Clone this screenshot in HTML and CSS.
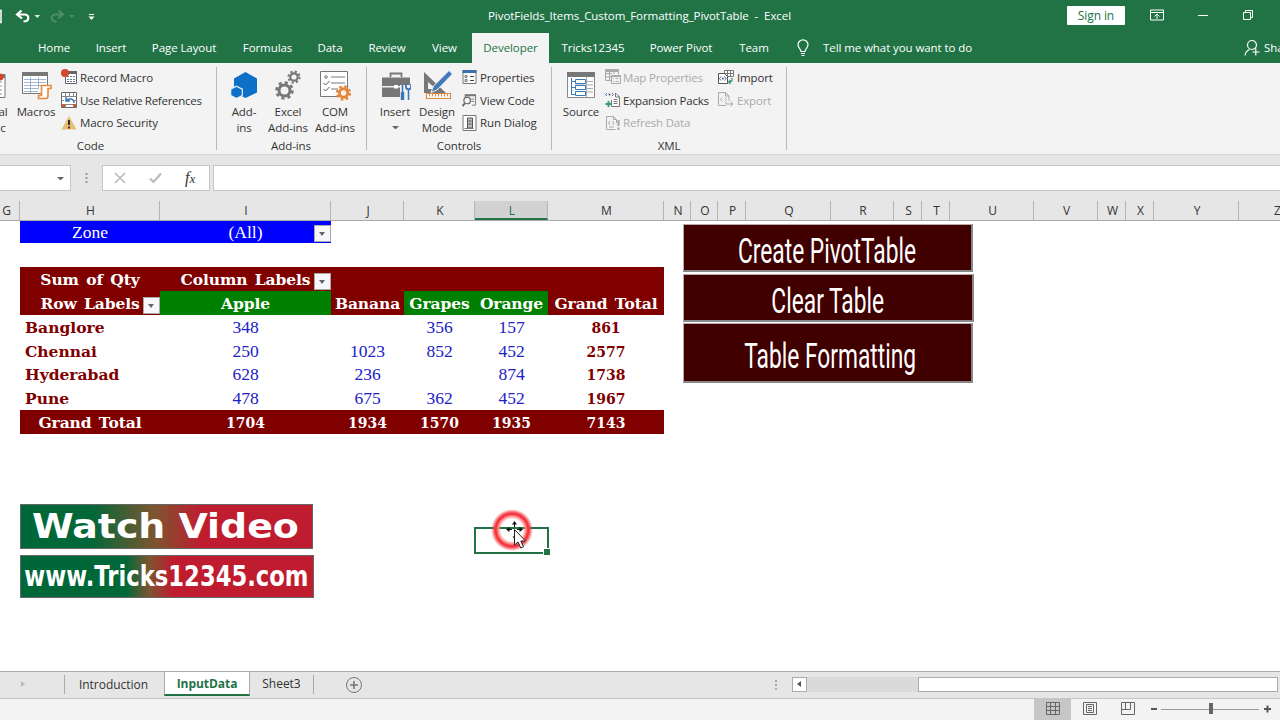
FILE: index.html
```html
<!DOCTYPE html>
<html lang="en">
<head>
  <meta charset="UTF-8">
  <meta name="viewport" content="width=device-width, initial-scale=1.0">
  <title>PivotFields_Items_Custom_Formatting_PivotTable - Excel</title>
  <link rel="stylesheet" href="styles.css">
</head>
<body>
  <div class="app">
    <header class="titlebar">
      <svg class="quick" width="110" height="32" viewBox="0 0 110 32" fill="none">
        <path d="M0 10.500h1v12h-1" stroke="#fff" stroke-width="1.500"/>
        <path d="M21.500 10.500l-4.500 4 5 4M17.500 14.500h7c5 0 5.500 7-1 7" stroke="#fff" stroke-width="2.200"/>
        <path d="M34.500 15h5.500l-2.700 3z" fill="#e4f0e8"/>
        <path d="M58.500 10.500l4.500 4-5 4M62.500 14.500h-7c-5 0-5.500 7 1 7" stroke="#4c8e68" stroke-width="2"/>
        <path d="M69 15h5.500l-2.700 3z" fill="#4c8e68"/>
        <path d="M89 14.500h5" stroke="#fff"/>
        <path d="M88.500 16.500h6l-3 3.500z" fill="#fff"/>
      </svg>
      <div class="doc-title">PivotFields_Items_Custom_Formatting_PivotTable&nbsp; -&nbsp; Excel</div>
      <div class="window-tools">
        <button class="signin">Sign in</button>
        <svg width="14" height="12" viewBox="0 0 14 12" fill="none" stroke="#fff"><path d="M.5 1h13v10H.5zM.5 3.500h13M7 10V5M4.500 7.500L7 5l2.500 2.500"/></svg>
        <svg width="10" height="12" viewBox="0 0 10 12" stroke="#fff"><path d="M0 6.500h10"/></svg>
        <svg width="12" height="12" viewBox="0 0 12 12" fill="none" stroke="#fff"><path d="M1.500 3.500h7v7h-7zM3.500 3V1.500h7v7H9"/></svg>
      </div>
    </header>

    <nav class="tabs">
      <span class="file">File</span>
      <span>Home</span>
      <span>Insert</span>
      <span>Page Layout</span>
      <span>Formulas</span>
      <span>Data</span>
      <span>Review</span>
      <span class="view-tab">View</span>
      <span class="active">Developer</span>
      <span>Tricks12345</span>
      <span>Power Pivot</span>
      <span>Team</span>
      <svg width="14" height="18" viewBox="0 0 14 18" fill="none" stroke="#fff" stroke-width="1.200"><path d="M5 12.500C5 10 2 9 2 5.800a5 5 0 0 1 10 0C12 9 9 10 9 12.500zM5 14.500h4M5.500 16.500h3"/></svg>
      <span class="tell">Tell me what you want to do</span>
      <svg width="16" height="18" viewBox="0 0 16 18" fill="none" stroke="#fff" stroke-width="1.200"><path d="M1 16.500c.5-3.500 2-5 4.500-6M8 1.500a4.500 4.500 0 1 1 0 9 4.500 4.500 0 0 1 0-9zM11.800 9.500v7M8.500 13h7"/></svg>
      <span class="share">Share</span>
    </nav>

    <section class="ribbon">
      <div class="group code">
        <div class="tools">
          <div class="big visual">
            <svg width="32" height="32" viewBox="0 0 32 32" fill="none"><path d="M4 5.500h25v23H4z" fill="#fff" stroke="#777"/><path d="M4 5h25v4H4z" fill="#777"/><path d="M8 13h18M8 17h18M8 21h18M8 25h18" stroke="#8796ad"/><circle cx="24" cy="8" r="3.500" fill="#d24726"/></svg>
            <span>Visual<br>Basic</span>
          </div>
          <div class="big macros">
            <svg width="32" height="32" viewBox="0 0 32 32" fill="none">
              <path d="M2.500 3.500h25v21h-25z" fill="#fff" stroke="#777"/>
              <path d="M2 3h26v4H2z" fill="#777"/>
              <path d="M4 10.500h22M4 13.500h22M4 16.500h20M4 19.500h14M4 22.500h14M10.500 8v16M18.500 8v12" stroke="#8ca4c8" stroke-width=".8"/>
              <path d="M21.500 16.500h9.500v3h-3v7c0 1.500-.5 3-2 3h-7.500v-3h3z" fill="#fff" stroke="#e58b3a" stroke-width="1.600"/>
            </svg>
            <span>Macros</span>
          </div>
          <div class="list">
            <div><svg width="16" height="16" viewBox="0 0 16 16" fill="none"><path d="M4.500 2.500h11v12h-11z" fill="#fff" stroke="#666"/><path d="M5 2h11v3H5z" fill="#666"/><path d="M6 7.500h8M6 10.500h8M6 12.500h8" stroke="#667c9c" stroke-dasharray="2 1"/><circle cx="4" cy="4" r="4" fill="#d3492d"/></svg>Record Macro</div>
            <div><svg width="16" height="16" viewBox="0 0 16 16" fill="none"><path d="M.5.500h15v15H.5z" fill="#fff" stroke="#666"/><path d="M.5 4.500h15M.5 8.500h15M4.500.500v15M8.500.500v4M12.500.500v15M.5 12.500h15" stroke="#888"/><path d="M3 5h10v7H3z" fill="#fff"/><path d="M13 11c0-5-6-5-8-2M5 5v4h4" stroke="#3976b9" stroke-width="1.500"/><path d="M1 12h3v3H1zM12 12h3v3h-3z" fill="#d0593c"/></svg><span class="tight">Use Relative References</span></div>
            <div><svg width="16" height="16" viewBox="0 0 16 16"><path d="M8 1l7.500 13.500H.5z" fill="#e9bd72"/><path d="M7 5h2v5H7zM7 11.500h2v2H7z" fill="#333"/></svg>Macro Security</div>
          </div>
        </div>
        <h6>Code</h6>
      </div>

      <div class="group addins">
        <div class="tools">
          <div class="big">
            <svg width="32" height="32" viewBox="0 0 32 32"><path d="M17.500 3l11.500 6.500v14L17.500 29 6 23V9.500z" fill="#0f70c7"/><path d="M8.500 17.200l5.800 3v6.300l-5.800 3-5.800-3v-6.300z" fill="#0f70c7" stroke="#f3f3f3" stroke-width="1.200"/></svg>
            <span>Add-<br>ins</span>
          </div>
          <div class="big">
            <svg width="32" height="32" viewBox="0 0 32 32" fill="none" stroke="#777"><circle cx="12.500" cy="21.500" r="5.500" stroke-width="3"/><circle cx="12.500" cy="21.500" r="8" stroke-width="2.600" stroke-dasharray="3.140 3.140"/><circle cx="22" cy="8" r="3.700" stroke-width="2.200"/><circle cx="22" cy="8" r="5.600" stroke-width="2" stroke-dasharray="2.200 2.200"/></svg>
            <span>Excel<br>Add-ins</span>
          </div>
          <div class="big">
            <svg width="32" height="32" viewBox="0 0 32 32" fill="none"><path d="M1.500 2.500h27v25h-27z" fill="#fff" stroke="#777"/><path d="M12 8h14M12 14h14M12 20h7" stroke="#777"/><circle cx="7" cy="8" r="1.300" stroke="#777"/><path d="M4.500 14l2 2 4-4M4.500 20l2 2 4-4" stroke="#555"/><circle cx="24.500" cy="24" r="4.200" stroke="#e58739" stroke-width="3" fill="#f3f3f3"/><circle cx="24.500" cy="24" r="6.400" stroke="#e58739" stroke-width="2.600" stroke-dasharray="2.513 2.513"/></svg>
            <span>COM<br>Add-ins</span>
          </div>
        </div>
        <h6>Add-ins</h6>
      </div>

      <div class="group controls">
        <div class="tools">
          <div class="big">
            <svg width="32" height="32" viewBox="0 0 32 32" fill="none"><path d="M11.500 8V4.500h11V8" stroke="#777" stroke-width="1.800"/><path d="M3 8.500h28V17H3zM3 18.500h28V28H3z" fill="#777"/><path d="M15 16h4v3.500h-4z" fill="#fff"/><path d="M21 16h11v15H21z" fill="#f3f3f3"/><path d="M23.500 16v8M29.500 20v11" stroke="#3c76b5" stroke-width="1.600"/><path d="M23.500 23v8" stroke="#3c76b5" stroke-width="3.500"/><path d="M27 15v3c0 3 5 3 5 0v-3" stroke="#3c76b5" stroke-width="1.800"/></svg>
            <span>Insert<i class="caret"></i></span>
          </div>
          <div class="big">
            <svg width="32" height="32" viewBox="0 0 32 32" fill="none"><path d="M3 3l22 21H3zM7 13v7h8z" fill="#777" fill-rule="evenodd"/><path d="M28 1.500l3.500 3.500L16 21l-6 2.500L12.500 17z" fill="#4179b9" stroke="#f3f3f3"/><path d="M5.500 24.500h24v5h-24z" fill="#fff" stroke="#dd8a3e" stroke-width="1.200"/><path d="M8.500 25v2.500M11.500 25v2.500M14.500 25v2.500M17.500 25v2.500M20.500 25v2.500M23.500 25v2.500M26.500 25v2.500" stroke="#dd8a3e"/></svg>
            <span>Design<br>Mode</span>
          </div>
          <div class="list">
            <div><svg width="14" height="16" viewBox="0 0 14 16" fill="none"><path d="M.5 1.500h13v13H.5z" fill="#fff" stroke="#777"/><path d="M0 1h14v3H0z" fill="#3d70ac"/><path d="M7.500 7.500h4M7.500 11.500h4" stroke="#444"/><path d="M2.500 6.500h2v2h-2zM2.500 10.500h2v2h-2z" stroke="#777"/></svg>Properties</div>
            <div><svg width="16" height="16" viewBox="0 0 16 16" fill="none"><path d="M3.500 6V2.500h11v11h-4" stroke="#777"/><path d="M3 2h12v2H3z" fill="#777"/><path d="M10 7h3M10 9.500h3" stroke="#777"/><circle cx="5.500" cy="8.500" r="3.500" stroke="#666" stroke-width="1.300"/><path d="M3 11.500L.5 14.500" stroke="#666" stroke-width="2"/></svg>View Code</div>
            <div><svg width="14" height="16" viewBox="0 0 14 16" fill="none"><path d="M.5.500h13v15H.5z" fill="#fff" stroke="#777"/><path d="M5 3h5v10H5z" fill="#bbb" stroke="#555"/><path d="M2 13.500h9" stroke="#777"/><path d="M6 6h3M6 9h3" stroke="#555"/></svg>Run Dialog</div>
          </div>
        </div>
        <h6>Controls</h6>
      </div>

      <div class="group xml">
        <div class="tools">
          <div class="big">
            <svg width="32" height="32" viewBox="0 0 32 32" fill="none"><path d="M2.500 3.500h27v25h-27z" fill="#fff" stroke="#888"/><path d="M2 3h28v5H2z" fill="#777"/><path d="M10 12.500h18M10 16h18M10 19.500h18M10 23h18M21.500 8v20" stroke="#aaa"/><path d="M6.500 9v17M6.500 12.500h4M6.500 18.500h4M6.500 25.500h4" stroke="#3979b8"/><path d="M10.500 10.500h10v4h-10zM10.500 16.500h10v4h-10zM10.500 22.500h10v4h-10z" fill="#fff" stroke="#3979b8"/></svg>
            <span>Source</span>
          </div>
          <div class="list first">
            <div class="off"><svg width="16" height="16" viewBox="0 0 16 16" fill="none" stroke="#aaa"><path d="M7 11.500H.5V.500h13v5M.5 4.500H7M4.500 1v10M.5 8H7M9 1v4"/><path d="M.5 2h13" stroke-width="2"/><path d="M6.500 6.500h9v8h-9zM8 9.500h1M10.500 9.500h3M8 12.500h1M10.500 12.500h3"/><path d="M6.500 7h9" stroke-width="2"/></svg>Map Properties</div>
            <div><svg width="16" height="16" viewBox="0 0 16 16" fill="none"><path d="M10 1.500h1l3.500 3.500v9.500h-8V8" fill="#fff" stroke="#777"/><path d="M10.500 1.500V5h4M8.500 7.500h4M8.500 9.500h4M8.500 11.500h4" stroke="#777"/><path d="M2 1L.5 2.500 2 4M7 1l1.500 1.500L7 4" stroke="#3979b8"/><circle cx="4.500" cy="2.500" r="1" fill="#555"/><path d="M3.500 9v6M.5 12h6" stroke="#3e9c6c" stroke-width="2"/></svg>Expansion Packs</div>
            <div class="off"><svg width="16" height="16" viewBox="0 0 16 16" fill="none" stroke="#aaa"><path d="M10.500 14.500h-9V1.500h7l3 3V8M8.500 1.500v3h3M5 6L3.500 8 5 10M7.500 6L9 8l-1.500 2M4 12h5"/><path d="M13.500 5v6M13.500 12.500v2.500" stroke-width="2.200"/></svg>Refresh Data</div>
          </div>
          <div class="list second">
            <div><svg width="16" height="16" viewBox="0 0 16 16" fill="none"><path d="M6.500 1.500h9v6h-9zM6.500 4.500h9M9.500 1.500v6M12.500 1.500v6" fill="#fff" stroke="#777"/><path d="M.5 4.500h6l3 3v7h-9z" fill="#fff" stroke="#555"/><path d="M3 7.500L1.500 9.500 3 11.500M6.500 7.500L8 9.500l-1.500 2" stroke="#3979b8"/><circle cx="4.800" cy="9.500" r="1" fill="#555"/><path d="M14 9v2c0 1.500-1 2-3 2M12.500 11l-2 2 2 2" stroke="#3e9c6c" stroke-width="1.300"/></svg>Import</div>
            <div class="off"><svg width="16" height="16" viewBox="0 0 16 16" fill="none" stroke="#aaa"><path d="M8 13.500H.5V.500h7l3.500 3.500v5M7.500.500v3.500h3.500M4 5.500L2.500 7.500 4 9.500M7 5.500l1.500 2L7 9.500M8 10v2h7M12.500 9.500l2.500 2.500-2.500 2.500"/></svg>Export</div>
          </div>
        </div>
        <h6>XML</h6>
      </div>
    </section>

    <section class="formula-bar">
      <div class="name-box"><i class="caret"></i></div>
      <svg width="31" height="25" viewBox="0 0 31 25" fill="#999"><path d="M14.500 8h2v2h-2zM14.500 12h2v2h-2zM14.500 16h2v2h-2z"/></svg>
      <div class="fx-box">
        <svg width="12" height="12" viewBox="0 0 12 12" stroke="#bbb" stroke-width="1.700"><path d="M1 1l10 10M11 1L1 11"/></svg>
        <svg width="13" height="12" viewBox="0 0 13 12" fill="none" stroke="#bbb" stroke-width="2.200"><path d="M1 6.500l3.500 3.500L12 1.500"/></svg>
        <em>f<small>x</small></em>
      </div>
      <div class="formula"></div>
    </section>

    <div class="columns">
      <span>G</span><span>H</span><span>I</span><span>J</span><span>K</span><span class="current">L</span><span>M</span><span>N</span><span>O</span><span>P</span><span>Q</span><span>R</span><span>S</span><span>T</span><span>U</span><span>V</span><span>W</span><span>X</span><span>Y</span><span>Z</span>
    </div>

    <main class="sheet">
      <div class="pivot">
        <div class="cell zone">Zone</div>
        <div class="cell zone">(All)<b class="drop"></b></div>
        <div class="blank"></div>
        <div class="blank row"></div>

        <div class="cell head">Sum of Qty</div>
        <div class="cell head">Column Labels<b class="drop"></b></div>
        <div class="cell head fill"></div>

        <div class="cell head">Row Labels<b class="drop"></b></div>
        <div class="cell head green">Apple</div>
        <div class="cell head">Banana</div>
        <div class="cell head green">Grapes</div>
        <div class="cell head green">Orange</div>
        <div class="cell head">Grand Total</div>

        <div class="cell name">Banglore</div><div class="cell">348</div><div class="cell"></div><div class="cell">356</div><div class="cell">157</div><div class="cell total">861</div>
        <div class="cell name">Chennai</div><div class="cell">250</div><div class="cell">1023</div><div class="cell">852</div><div class="cell">452</div><div class="cell total">2577</div>
        <div class="cell name">Hyderabad</div><div class="cell">628</div><div class="cell">236</div><div class="cell"></div><div class="cell">874</div><div class="cell total">1738</div>
        <div class="cell name">Pune</div><div class="cell">478</div><div class="cell">675</div><div class="cell">362</div><div class="cell">452</div><div class="cell total">1967</div>

        <div class="cell head">Grand Total</div><div class="cell head foot">1704</div><div class="cell head foot">1934</div><div class="cell head foot">1570</div><div class="cell head foot">1935</div><div class="cell head foot">7143</div>
      </div>

      <!-- objects floating over the grid -->
      <button class="macro create"><span>Create PivotTable</span></button>
      <button class="macro clear"><span>Clear Table</span></button>
      <button class="macro format"><span>Table Formatting</span></button>
      <div class="banner watch"><span>Watch Video</span></div>
      <div class="banner site"><span>www.Tricks12345.com</span></div>
      <div class="selection"></div>
      <div class="click-ring"></div>
      <svg class="pointer" width="24" height="30" viewBox="0 0 24 30">
        <path d="M9.500 0l2.500 3.500H7zM9.500 18l-2-2.500h4zM1 8.500l3.500-2.500v5zM18 8.500l-3.500-2.500v5z" fill="#111"/>
        <path d="M9.500 3v3M4 8.500h3M12 8.500h3" stroke="#111" fill="none"/>
        <path d="M9.500 8.500v15.500l3.500-3 2.800 6 2.700-1.200-2.700-5.800h4.700z" fill="#fff" stroke="#222"/>
      </svg>
    </main>

    <footer class="sheet-tabs">
      <span class="nav"><i></i></span>
      <span class="tab intro">Introduction</span>
      <span class="tab on">InputData</span>
      <span class="tab third">Sheet3</span>
      <svg class="add" width="18" height="18" viewBox="0 0 18 18" fill="none" stroke="#777"><circle cx="9" cy="9" r="7.500"/><path d="M5 9h8M9 5v8" stroke-width="1.600"/></svg>
      <svg class="grip" width="4" height="14" viewBox="0 0 4 14" fill="#aaa"><path d="M1 2h2v2H1zM1 6h2v2H1zM1 10h2v2H1z"/></svg>
      <div class="scroll"><div class="arrow"></div><div class="track"></div><div class="thumb"></div></div>
    </footer>

    <footer class="status">
      <div class="view on"><svg width="14" height="14" viewBox="0 0 14 14" fill="none" stroke="#666"><path d="M.5.500h13v12H.5zM.5 4.500h13M.5 8.500h13M4.500.500v12M9.500.500v12"/></svg></div>
      <div class="view"><svg width="14" height="14" viewBox="0 0 14 14" fill="none" stroke="#666"><path d="M.5.500h13v12H.5zM3.500 2.500h7v8h-7zM5 4.500h4M5 6.500h4M5 8.500h4"/></svg></div>
      <div class="view"><svg width="14" height="14" viewBox="0 0 14 14" fill="none" stroke="#666"><path d="M.5.500h13v12H.5zM.5 7.500H9.500V.500M4.500.500v7"/></svg></div>
      <svg class="zoom" width="130" height="22" viewBox="0 0 130 22"><path d="M8 11h6M121 11h7M124.500 7.500v7" stroke="#555" stroke-width="2"/><path d="M18 11.500h98" stroke="#999"/><path d="M66 5h4v11h-4z" fill="#666"/></svg>
    </footer>
  </div>
</body>
</html>
```
FILE: styles.css
```css
* { box-sizing: border-box; }
body {
  margin: 0;
  font: 12px "Open Sans", "Noto Sans", sans-serif;
  color: #333;
}
svg { display: block; flex: none; }
button { border: 0; padding: 0; font: inherit; }

.app {
  display: flex;
  flex-direction: column;
  width: 1280px;
  height: 720px;
  overflow: hidden;
  background: #fff;
}

/* title bar */
.titlebar {
  display: flex;
  align-items: center;
  flex: none;
  height: 32px;
  color: #fff;
  background: #217346;
}
.doc-title {
  width: 304px;
  margin-left: 378px;
  padding-bottom: 2px;
  font-size: 11.5px;
  letter-spacing: -.06px;
  white-space: nowrap;
}
.window-tools {
  display: flex;
  align-items: center;
  margin-left: 275px;
  padding-bottom: 2px;
}
.signin {
  width: 58px;
  height: 19px;
  margin-right: 25px;
  padding-top: 1px;
  border-radius: 1px;
  line-height: 18px;
  color: #217346;
  background: #fff;
  letter-spacing: -.1px;
}
.window-tools svg + svg { margin-left: 34px; }

/* ribbon tabs */
.tabs {
  display: grid;
  grid-template-columns: 25px 58px 56px 90px 77px 48px 66px 52px 77px 88px 88px 58px 40px 417px 24px 40px;
  align-items: center;
  justify-items: center;
  flex: none;
  height: 31px;
  font-size: 11.5px;
  letter-spacing: -.08px;
  color: #fff;
  background: #217346;
  white-space: nowrap;
}
.tabs .file { justify-self: start; margin-left: -18px; }
.tabs .view-tab { padding-right: 3px; }
.tabs .tell { justify-self: start; }
.tabs .share { justify-self: start; }
.tabs .active {
  width: 77px;
  height: 30px;
  align-self: end;
  line-height: 29px;
  text-align: center;
  color: #217346;
  background: #f3f3f3;
}

/* ribbon */
.ribbon {
  display: flex;
  flex: none;
  height: 92px;
  border-bottom: 1px solid #d5d5d5;
  background: #f3f3f3;
}
.group {
  display: flex;
  flex-direction: column;
  height: 83px;
  margin-top: 4px;
  border-right: 1px solid #b9b9b9;
}
.group h6 {
  margin: 0;
  font-size: 11.5px;
  font-weight: normal;
  line-height: 16px;
  letter-spacing: -.1px;
  text-align: center;
}
.code { width: 217px; }
.code h6 { padding-right: 35px; }
.addins { width: 150px; padding-left: 5px; }
.addins h6 { padding-right: 6px; }
.controls { width: 185px; padding-left: 8px; }
.controls h6 { padding-right: 8px; }
.xml { width: 235px; padding-left: 7px; }
.xml h6 { padding-right: 7px; }
.tools { display: flex; flex: none; height: 71px; align-items: flex-start; }
.big {
  display: flex;
  flex-direction: column;
  align-items: center;
  width: 44px;
  padding-top: 2px;
  font-size: 11.5px;
  line-height: 16px;
  letter-spacing: -.1px;
  text-align: center;
  white-space: nowrap;
}
.big span { padding-top: 3px; }
.big .caret { display: block; margin: 6px auto 0; }
.big.visual { width: 52px; margin-left: -34px; }
.big.macros { width: 36px; }
.addins .big:nth-child(3) { width: 50px; }
.controls .big:first-child { width: 40px; }
.list {
  margin-top: -1px;
  padding-left: 3px;
  font-size: 11.5px;
  letter-spacing: -.12px;
  white-space: nowrap;
}
.code .list { padding-left: 7px; }
.list > div { display: flex; align-items: center; gap: 3px; height: 22.7px; }
.list.first { padding-left: 2px; letter-spacing: -.18px; }
.list.first > div { gap: 2px; }
.list.second { padding-left: 9px; }
.controls .list svg { width: 15px; }
.off { color: #aaa; }
.tight { letter-spacing: -.27px; }
.caret {
  width: 7px;
  border: 3.5px solid transparent;
  border-top-color: #666;
  border-bottom: 0;
}

/* formula bar */
.formula-bar {
  display: flex;
  flex: none;
  height: 46px;
  padding-top: 10px;
  background: #e6e6e6;
}
.name-box, .fx-box, .formula {
  display: flex;
  align-items: center;
  height: 26px;
  border: 1px solid #c6c6c6;
  background: #fff;
}
.name-box {
  justify-content: flex-end;
  width: 71px;
  padding-right: 6px;
  border-left: 0;
}
.fx-box { width: 108px; padding-left: 11px; gap: 23px; }
.fx-box em {
  font: italic 16px "Liberation Serif", serif;
  color: #333;
}
.fx-box small { font-size: 13px; }
.formula { flex: 1; margin-left: 3px; border-right: 0; }

/* column headers, same widths as the sheet grid */
.columns {
  display: grid;
  grid-template-columns: 28px 140px 171px 73px 71px 73px 116px 27px 27px 28px 85px 63px 28px 28px 84px 64px 28px 28px 85px 76px;
  flex: none;
  width: 1323px;
  height: 20px;
  margin-left: -8px;
  border-bottom: 1px solid #ababab;
  line-height: 20px;
  text-align: center;
  background: #e6e6e6;
}
.columns span { height: 19px; padding-left: 2px; border-right: 1px solid #b5b5b5; }
.columns .current {
  color: #217346;
  background: #d2d2d2;
  border-bottom: 2px solid #217346;
}

/* worksheet */
.sheet { position: relative; height: 450px; flex: none; }
.pivot {
  display: grid;
  grid-template-columns: 140px 171px 73px 71px 73px 116px;
  grid-template-rows: 22px 24px 24px 24px repeat(4, 23.75px) 24px;
  width: 644px;
  margin-left: 20px;
  font: 17.5px "Liberation Serif", serif;
}
.blank { grid-column: 3 / -1; }
.blank.row { grid-column: 1 / -1; }
.cell {
  position: relative;
  display: flex;
  align-items: center;
  justify-content: center;
  padding-top: 1px;
  white-space: nowrap;
  color: #2020c8;
}
.zone { color: #fff; background: #0000ff; }
.head, .name { font: bold 15.5px "DejaVu Serif", serif; }
.head {
  color: #fff;
  background: #800000;
  letter-spacing: -.1px;
  word-spacing: 2px;
}
.foot, .total {
  font: bold 15.5px "DejaVu Serif Condensed", "DejaVu Serif", serif;
  font-stretch: condensed;
  letter-spacing: 0;
}
.fill { grid-column: 3 / -1; }
.green { background: #008000; }
.name {
  justify-content: flex-start;
  padding-left: 5px;
  color: #800000;
}
.total { color: #800000; }
.drop {
  position: absolute;
  right: 0;
  bottom: 1px;
  width: 17px;
  height: 17px;
  border: 1px solid #aaa;
  background: #f7f7fb;
}
.drop::after {
  content: "";
  position: absolute;
  left: 4px;
  top: 6px;
  border: 3.5px solid transparent;
  border-top: 4px solid #666;
  border-bottom: 0;
}

/* floating buttons */
.macro {
  position: absolute;
  left: 683px;
  display: flex;
  align-items: center;
  justify-content: center;
  width: 290px;
  border: 1px solid #b9a9a9;
  border-right: 2px solid #888;
  border-bottom: 2px solid #888;
  font: 35px/40px Roboto, sans-serif;
  color: #fff;
  background: #400000;
}
.macro span {
  flex: none;
  padding-top: 8px;
  white-space: nowrap;
  transform: scaleX(.65);
}
.create { top: 3px; height: 48px; }
.clear { top: 53px; height: 48px; width: 291px; }
.format { top: 102px; height: 60px; padding-left: 5px; }
.banner {
  position: absolute;
  left: 20px;
  display: flex;
  align-items: center;
  justify-content: center;
  border: 1px solid #666;
  font: bold 33px/40px "DejaVu Sans", sans-serif;
  color: #fff;
}
.banner span { flex: none; margin-left: -2px; white-space: nowrap; }
.watch {
  top: 283px;
  width: 293px;
  height: 45px;
  background: linear-gradient(90deg, #006838 24%, #7d5530 46%, #c01c30 62%);
}
.watch span { transform: scaleX(1.147); }
.site {
  top: 334px;
  width: 294px;
  height: 43px;
  font-size: 28px;
  background: linear-gradient(90deg, #006838 36%, #7d5530 44%, #c01c30 52%);
}
.site span { transform: scaleX(.81); }

.selection {
  position: absolute;
  left: 474px;
  top: 306px;
  width: 75px;
  height: 27px;
  border: 2px solid #217346;
}
.selection::after {
  content: "";
  position: absolute;
  right: -3px;
  bottom: -3px;
  width: 6px;
  height: 6px;
  border: solid #fff;
  border-width: 1px 0 0 1px;
  background: #217346;
}
.click-ring {
  position: absolute;
  left: 491px;
  top: 288px;
  width: 42px;
  height: 42px;
  border-radius: 50%;
  background: radial-gradient(circle, transparent 11px, #f88 14px, #f62b35 16px, #f33a42 17px, transparent 21px);
}
.pointer { position: absolute; left: 505px; top: 300px; }

/* sheet tabs */
.sheet-tabs {
  display: flex;
  align-items: center;
  flex: none;
  height: 28px;
  padding-bottom: 1px;
  border-top: 1px solid #ababab;
  border-bottom: 1px solid #c6c6c6;
  background: #e6e6e6;
}
.nav {
  width: 65px;
  height: 19px;
  padding: 6px 0 0 21px;
  border-right: 1px solid #aaa;
}
.nav i {
  display: block;
  width: 0;
  border: 3.5px solid transparent;
  border-left: 4px solid #bbb;
  border-right: 0;
}
.tab { text-align: center; letter-spacing: -.02px; }
.intro { width: 99px; padding-right: 2px; }
.on.tab {
  width: 86px;
  height: 24px;
  align-self: flex-start;
  border: solid #ababab;
  border-width: 0 1px;
  border-bottom: 2px solid #217346;
  line-height: 24px;
  font-weight: bold;
  letter-spacing: -.05px;
  color: #217346;
  background: #fff;
}
.third { width: 64px; height: 19px; line-height: 18px; border-right: 1px solid #aaa; }
.add { margin-left: 31px; }
.grip { margin-left: 411px; }
.scroll { display: flex; height: 15px; margin-left: 14px; }
.arrow { width: 15px; border: 1px solid #ababab; background: #fff; padding: 3px 0 0 4px; }
.arrow::after {
  content: "";
  display: block;
  width: 0;
  border: 3.5px solid transparent;
  border-right: 4px solid #555;
  border-left: 0;
}
.track { width: 111px; background: #dadada; }
.thumb { width: 360px; border: 1px solid #ababab; background: #fff; }

/* status bar */
.status { display: flex; flex: 1; padding-left: 1034px; background: #f3f3f3; }
.view { display: flex; justify-content: center; width: 38px; padding-top: 3px; }
.view.on { width: 37px; background: #c6c6c6; }
.zoom { margin-left: -4px; margin-top: -1px; }
```
